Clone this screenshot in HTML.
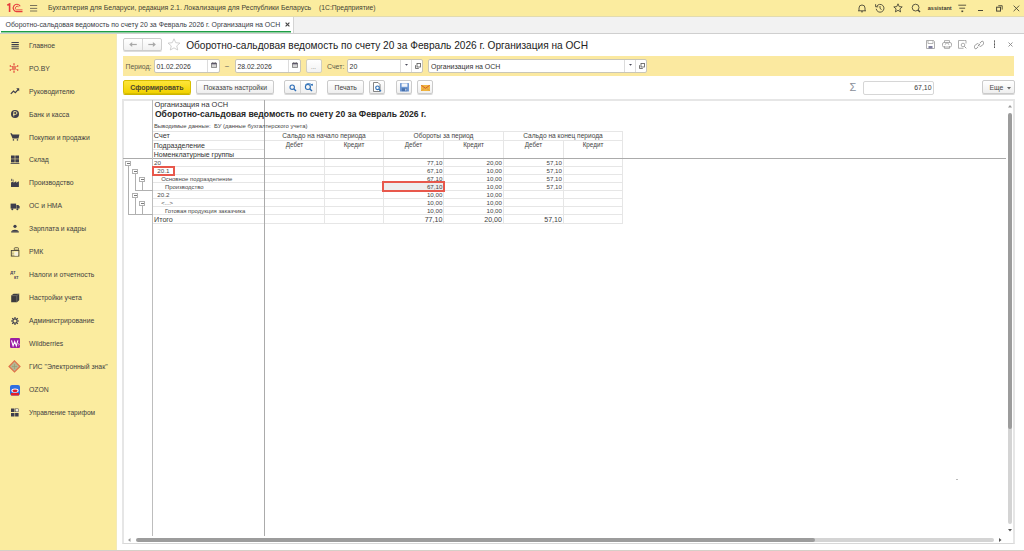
<!DOCTYPE html>
<html><head><meta charset="utf-8">
<style>
*{margin:0;padding:0;box-sizing:border-box}
html,body{width:1024px;height:551px;overflow:hidden;background:#fff;font-family:"Liberation Sans",sans-serif;color:#333}
.a{position:absolute;white-space:nowrap}
</style></head><body>
<div style="position:absolute;left:0px;top:0px;width:1024px;height:16px;background:#fbec9f"></div>
<div style="position:absolute;left:0px;top:16px;width:1024px;height:1px;background:#e2dbb0"></div>
<div class="a" style="left:48px;top:3px;font-size:6.95px;line-height:10px;color:#433f33;">Бухгалтерия для Беларуси, редакция 2.1. Локализация для Республики Беларусь</div>
<div class="a" style="left:319px;top:3px;font-size:6.75px;line-height:10px;color:#433f33;">(1С:Предприятие)</div>
<div style="position:absolute;left:0px;top:17px;width:1024px;height:17px;background:#f2f2f2;border-bottom:1px solid #cfcfcf"></div>
<div style="position:absolute;left:0px;top:17px;width:294px;height:16px;background:#fff;border-right:1px solid #d4d4d4"></div>
<div class="a" style="left:5.5px;top:20px;font-size:6.93px;line-height:10px;color:#383c45;">Оборотно-сальдовая ведомость по счету 20 за Февраль 2026 г. Организация на ОСН</div>
<div style="position:absolute;left:1px;top:31px;width:290px;height:1px;background:#1f9d45"></div>
<div style="position:absolute;left:1px;top:32px;width:290px;height:1px;background:#8fd0a2"></div>
<div style="position:absolute;left:0px;top:34px;width:116px;height:517px;background:#fbec9f"></div>
<div style="position:absolute;left:116px;top:34px;width:1px;height:517px;background:#f3eab8"></div>
<div class="a" style="left:29px;top:41px;font-size:6.85px;line-height:10px;color:#3f3f3f;">Главное</div>
<div class="a" style="left:29px;top:64px;font-size:6.85px;line-height:10px;color:#3f3f3f;">РО.BY</div>
<div class="a" style="left:29px;top:87px;font-size:6.85px;line-height:10px;color:#3f3f3f;">Руководителю</div>
<div class="a" style="left:29px;top:110px;font-size:6.85px;line-height:10px;color:#3f3f3f;">Банк и касса</div>
<div class="a" style="left:29px;top:133px;font-size:6.85px;line-height:10px;color:#3f3f3f;">Покупки и продажи</div>
<div class="a" style="left:29px;top:155px;font-size:6.85px;line-height:10px;color:#3f3f3f;">Склад</div>
<div class="a" style="left:29px;top:178px;font-size:6.85px;line-height:10px;color:#3f3f3f;">Производство</div>
<div class="a" style="left:29px;top:201px;font-size:6.85px;line-height:10px;color:#3f3f3f;">ОС и НМА</div>
<div class="a" style="left:29px;top:224px;font-size:6.85px;line-height:10px;color:#3f3f3f;">Зарплата и кадры</div>
<div class="a" style="left:29px;top:247px;font-size:6.85px;line-height:10px;color:#3f3f3f;">РМК</div>
<div class="a" style="left:29px;top:270px;font-size:6.85px;line-height:10px;color:#3f3f3f;">Налоги и отчетность</div>
<div class="a" style="left:29px;top:293px;font-size:6.85px;line-height:10px;color:#3f3f3f;">Настройки учета</div>
<div class="a" style="left:29px;top:316px;font-size:6.85px;line-height:10px;color:#3f3f3f;">Администрирование</div>
<div class="a" style="left:29px;top:339px;font-size:6.85px;line-height:10px;color:#3f3f3f;">Wildberries</div>
<div class="a" style="left:29px;top:362px;font-size:6.85px;line-height:10px;color:#3f3f3f;">ГИС "Электронный знак"</div>
<div class="a" style="left:29px;top:385px;font-size:6.85px;line-height:10px;color:#3f3f3f;">OZON</div>
<div class="a" style="left:29px;top:408px;font-size:6.6px;line-height:10px;color:#3f3f3f;">Управление тарифом</div>
<div class="a" style="left:186.2px;top:41px;font-size:10.15px;line-height:10px;color:#222;">Оборотно-сальдовая ведомость по счету 20 за Февраль 2026 г. Организация на ОСН</div>
<div style="position:absolute;left:123px;top:38px;width:39px;height:13px;border:1px solid #cdcdcd;border-radius:2px;background:linear-gradient(#fff,#f1f1f1);box-shadow:0 1px 0 #dcdcdc"></div>
<div style="position:absolute;left:142px;top:39px;width:1px;height:11px;background:#d6d6d6"></div>
<svg style="position:absolute;left:128px;top:40px" width="30" height="9" viewBox="0 0 30 9"><path d="M3 4.5h5.8" stroke="#a9a9a9" stroke-width="1.2"/><path d="M1.2 4.5L4.2 2v5z" fill="#a9a9a9"/><path d="M20.3 4.5h5.8" stroke="#a9a9a9" stroke-width="1.2"/><path d="M27.9 4.5L24.9 2v5z" fill="#a9a9a9"/></svg>
<svg style="position:absolute;left:167px;top:38px" width="14" height="13" viewBox="0 0 14 13"><path d="M7 0.8l1.75 3.9 4.2 0.4-3.2 2.8 0.95 4.1L7 9.85 3.3 12l0.95-4.1L1.05 5.1l4.2-0.4z" fill="none" stroke="#c4c4c4" stroke-width="0.8"/></svg>
<div style="position:absolute;left:123px;top:56px;width:891px;height:20px;background:#fbe9a0"></div>
<div style="position:absolute;left:154px;top:59px;width:66px;height:14px;background:#fff;border:1px solid #c9c6b8;border-radius:2px"></div>
<div style="position:absolute;left:207px;top:60px;width:1px;height:12px;background:#dcdcdc"></div>
<div style="position:absolute;left:235px;top:59px;width:66px;height:14px;background:#fff;border:1px solid #c9c6b8;border-radius:2px"></div>
<div style="position:absolute;left:288px;top:60px;width:1px;height:12px;background:#dcdcdc"></div>
<div style="position:absolute;left:306px;top:59px;width:16px;height:14px;border:1px solid #d2cfc0;border-radius:2px;background:linear-gradient(#fff,#f2f2f2)"></div>
<div style="position:absolute;left:347px;top:59px;width:76px;height:14px;background:#fff;border:1px solid #c9c6b8;border-radius:2px"></div>
<div style="position:absolute;left:400px;top:60px;width:1px;height:12px;background:#dcdcdc"></div>
<div style="position:absolute;left:411px;top:60px;width:1px;height:12px;background:#dcdcdc"></div>
<div style="position:absolute;left:428px;top:59px;width:219px;height:14px;background:#fff;border:1px solid #c9c6b8;border-radius:2px"></div>
<div style="position:absolute;left:624px;top:60px;width:1px;height:12px;background:#dcdcdc"></div>
<div style="position:absolute;left:635px;top:60px;width:1px;height:12px;background:#dcdcdc"></div>
<svg style="position:absolute;left:210.5px;top:62px" width="6" height="6" viewBox="0 0 6 6"><rect x="0.4" y="1" width="5.2" height="4.7" rx="0.6" fill="#d4d4d4" stroke="#6a6a6a" stroke-width="0.8"/><rect x="0.4" y="1" width="5.2" height="1.3" fill="#5a5468"/><path d="M1.6 0v1.2M4.4 0v1.2" stroke="#777" stroke-width="0.6"/></svg>
<svg style="position:absolute;left:291.5px;top:62px" width="6" height="6" viewBox="0 0 6 6"><rect x="0.4" y="1" width="5.2" height="4.7" rx="0.6" fill="#d4d4d4" stroke="#6a6a6a" stroke-width="0.8"/><rect x="0.4" y="1" width="5.2" height="1.3" fill="#5a5468"/><path d="M1.6 0v1.2M4.4 0v1.2" stroke="#777" stroke-width="0.6"/></svg>
<svg style="position:absolute;left:404.5px;top:64.3px" width="3" height="2" viewBox="0 0 3 2"><path d="M0 0h3L1.5 1.8z" fill="#4a4a5a"/></svg>
<svg style="position:absolute;left:628.5px;top:64.3px" width="3" height="2" viewBox="0 0 3 2"><path d="M0 0h3L1.5 1.8z" fill="#4a4a5a"/></svg>
<svg style="position:absolute;left:415px;top:62.5px" width="6" height="6" viewBox="0 0 6 6"><path d="M0.5 2.2v3.3h3.3" fill="none" stroke="#555" stroke-width="0.8"/><rect x="2" y="0.5" width="3.5" height="3.5" fill="#fff" stroke="#555" stroke-width="0.8"/></svg>
<svg style="position:absolute;left:639px;top:62.5px" width="6" height="6" viewBox="0 0 6 6"><path d="M0.5 2.2v3.3h3.3" fill="none" stroke="#555" stroke-width="0.8"/><rect x="2" y="0.5" width="3.5" height="3.5" fill="#fff" stroke="#555" stroke-width="0.8"/></svg>
<div class="a" style="left:125.5px;top:62px;font-size:6.85px;line-height:10px;color:#5e5b4c;">Период:</div>
<div class="a" style="left:156.5px;top:62px;font-size:6.85px;line-height:10px;color:#333;">01.02.2026</div>
<div class="a" style="left:225px;top:61px;font-size:7px;line-height:10px;color:#555;">–</div>
<div class="a" style="left:237.5px;top:62px;font-size:6.85px;line-height:10px;color:#333;">28.02.2026</div>
<div class="a" style="left:311px;top:62px;font-size:6px;line-height:10px;color:#666;">...</div>
<div class="a" style="left:327px;top:62px;font-size:7px;line-height:10px;color:#5e5b4c;">Счет:</div>
<div class="a" style="left:349.5px;top:62px;font-size:7px;line-height:10px;color:#333;">20</div>
<div class="a" style="left:431px;top:62px;font-size:7px;line-height:10px;color:#333;">Организация на ОСН</div>
<div style="position:absolute;left:123px;top:80px;width:68px;height:14px;border:1px solid #d8bf00;border-radius:2px;background:linear-gradient(#fde53a,#f2d200);box-shadow:0 1px 0 #cdb400"></div>
<div style="position:absolute;left:196px;top:80px;width:78px;height:14px;border:1px solid #cbcbcb;border-radius:2px;background:linear-gradient(#ffffff,#efefef);box-shadow:0 1px 0 #d9d9d9"></div>
<div style="position:absolute;left:284px;top:80px;width:33px;height:14px;border:1px solid #cbcbcb;border-radius:2px;background:linear-gradient(#ffffff,#efefef);box-shadow:0 1px 0 #d9d9d9"></div>
<div style="position:absolute;left:300px;top:81px;width:1px;height:12px;background:#d4d4d4"></div>
<div style="position:absolute;left:327px;top:80px;width:37px;height:14px;border:1px solid #cbcbcb;border-radius:2px;background:linear-gradient(#ffffff,#efefef);box-shadow:0 1px 0 #d9d9d9"></div>
<div style="position:absolute;left:369px;top:80px;width:16px;height:14px;border:1px solid #cbcbcb;border-radius:2px;background:linear-gradient(#ffffff,#efefef);box-shadow:0 1px 0 #d9d9d9"></div>
<div style="position:absolute;left:396px;top:80px;width:16px;height:14px;border:1px solid #cbcbcb;border-radius:2px;background:linear-gradient(#ffffff,#efefef);box-shadow:0 1px 0 #d9d9d9"></div>
<div style="position:absolute;left:417px;top:80px;width:16px;height:14px;border:1px solid #cbcbcb;border-radius:2px;background:linear-gradient(#ffffff,#efefef);box-shadow:0 1px 0 #d9d9d9"></div>
<svg style="position:absolute;left:289px;top:83.5px" width="8" height="8" viewBox="0 0 8 8"><circle cx="3.2" cy="3.2" r="2.2" fill="none" stroke="#2f6fb8" stroke-width="1.1"/><path d="M4.8 4.8L7 7" stroke="#2f6fb8" stroke-width="1.4"/></svg>
<svg style="position:absolute;left:304px;top:83px" width="10" height="9" viewBox="0 0 10 9"><circle cx="3.9" cy="4" r="2.5" fill="none" stroke="#2a6db5" stroke-width="1.1"/><path d="M5.6 5.7L8 8" stroke="#2a6db5" stroke-width="1.4"/><path d="M1.5 1.5Q4 -0.3 7 1.2L8.5 2.2" stroke="#2a6db5" stroke-width="0.9" fill="none"/><path d="M9 0.5l-0.3 2.3-2-0.5z" fill="#2a6db5"/></svg>
<svg style="position:absolute;left:373px;top:82px" width="9" height="10" viewBox="0 0 9 10"><path d="M0.5 0.5h4.5l2 2v7h-6.5z" fill="#fff" stroke="#666" stroke-width="0.8"/><circle cx="4.5" cy="5.8" r="1.8" fill="none" stroke="#2a6db5" stroke-width="1.1"/><path d="M5.8 7.1L8 9.2" stroke="#2a6db5" stroke-width="1.3"/></svg>
<svg style="position:absolute;left:399.5px;top:83px" width="9" height="9" viewBox="0 0 9 9"><rect x="0" y="0" width="9" height="8.5" rx="0.6" fill="#6d97d2"/><rect x="1.6" y="0.4" width="5.8" height="3.4" fill="#f2f5fa"/><rect x="1.8" y="5.2" width="5.4" height="3" fill="#4670ad"/><rect x="5.2" y="5.7" width="1.2" height="2" fill="#c9d6ea"/></svg>
<svg style="position:absolute;left:420.5px;top:84.5px" width="9" height="6" viewBox="0 0 9 6"><rect x="0" y="0" width="9" height="6" fill="#f0b640"/><path d="M0.3 0.3l4.2 3 4.2-3" stroke="#d0542c" stroke-width="0.9" fill="none"/><path d="M0.3 5.7l3-2.3M8.7 5.7l-3-2.3" stroke="#d98a36" stroke-width="0.6" fill="none"/></svg>
<div class="a" style="left:849.5px;top:81px;font-size:11px;line-height:12px;color:#8a8f9a">&Sigma;</div>
<div style="position:absolute;left:863px;top:81px;width:71px;height:14px;background:#fff;border:1px solid #d6d6d6;border-radius:2px"></div>
<div style="position:absolute;left:982px;top:80px;width:33px;height:14px;border:1px solid #cbcbcb;border-radius:2px;background:linear-gradient(#ffffff,#efefef);box-shadow:0 1px 0 #d9d9d9"></div>
<svg style="position:absolute;left:1006.5px;top:87px" width="4" height="3" viewBox="0 0 4 3"><path d="M0 0h4L2 2.5z" fill="#666"/></svg>
<div class="a" style="left:130.2px;top:83px;font-size:7px;line-height:10px;color:#4a4630;font-weight:bold;">Сформировать</div>
<div class="a" style="left:203.6px;top:83px;font-size:6.85px;line-height:10px;color:#444;">Показать настройки</div>
<div class="a" style="left:334.5px;top:83px;font-size:6.85px;line-height:10px;color:#444;">Печать</div>
<div class="a" style="right:92.5px;top:83px;font-size:6.9px;line-height:10px;color:#3a3a3a;">67,10</div>
<div class="a" style="left:989.5px;top:83px;font-size:6.85px;line-height:10px;color:#4a4a4a;">Еще</div>
<svg style="position:absolute;left:6px;top:3px" width="18" height="10" viewBox="0 0 18 10"><path d="M1.3 2.3L3.6 1V9" stroke="#e63c3c" stroke-width="1.6" fill="none"/><path d="M14.2 3.2A3.7 3.7 0 1 0 10.5 8.6H16.5" stroke="#e63c3c" stroke-width="1.1" fill="none"/><path d="M12.6 3.8A1.9 1.9 0 1 0 10.5 6.9H16.5" stroke="#e63c3c" stroke-width="0.9" fill="none"/></svg>
<svg style="position:absolute;left:30px;top:4px" width="8" height="8" viewBox="0 0 8 8"><path d="M0 1.5h7.2M0 4.4h7.2M0 7h7.2" stroke="#6b6653" stroke-width="0.9"/></svg>
<svg style="position:absolute;left:857px;top:2.5px" width="10" height="10" viewBox="0 0 10 10"><path d="M1 7.8h8M2 7.8V5A3 3 0 0 1 8 5V7.8M4 8.8h2" stroke="#4b4838" stroke-width="0.9" fill="none"/></svg>
<svg style="position:absolute;left:875px;top:2.5px" width="10" height="10" viewBox="0 0 10 10"><path d="M1.6 3.5A3.9 3.9 0 1 1 1.2 5.8" stroke="#4b4838" stroke-width="0.9" fill="none"/><path d="M0.6 1.2v2.6h2.6" stroke="#4b4838" stroke-width="0.9" fill="none"/><path d="M5 3v2.4l1.6 1.2" stroke="#4b4838" stroke-width="0.9" fill="none"/></svg>
<svg style="position:absolute;left:893px;top:2.5px" width="10" height="10" viewBox="0 0 10 10"><path d="M5 0.8l1.2 2.8 3 0.3-2.3 2 0.7 3L5 7.3 2.4 8.9l0.7-3-2.3-2 3-0.3z" stroke="#4b4838" stroke-width="0.9" fill="none" stroke-linejoin="round"/></svg>
<svg style="position:absolute;left:911px;top:2.5px" width="10" height="10" viewBox="0 0 10 10"><circle cx="4.6" cy="4.6" r="3.4" stroke="#4b4838" stroke-width="0.9" fill="none"/><path d="M7 7l2 2" stroke="#4b4838" stroke-width="1.4"/></svg>
<div class="a" style="left:927.8px;top:3px;font-size:5.5px;line-height:10px;color:#3e3b30;font-weight:bold;">assistant</div>
<svg style="position:absolute;left:958px;top:4px" width="9" height="9" viewBox="0 0 9 9"><path d="M0.3 1.2h7.8M1.3 4.2h5.8" stroke="#4b4838" stroke-width="0.9"/><path d="M3.4 6.5h1.8v1.6H3.4z" fill="#4b4838"/></svg>
<div style="position:absolute;left:978px;top:10px;width:5px;height:1px;background:#4b4838"></div>
<svg style="position:absolute;left:995.5px;top:4.5px" width="7" height="7" viewBox="0 0 7 7"><rect x="0.6" y="2.2" width="3.9" height="3.9" stroke="#4b4838" stroke-width="1" fill="none"/><path d="M2.3 0.7h3.9v3.9" stroke="#4b4838" stroke-width="0.9" fill="none"/></svg>
<svg style="position:absolute;left:1013px;top:4.8px" width="7" height="7" viewBox="0 0 7 7"><path d="M0.6 0.6l5.6 5.6M6.2 0.6L0.6 6.2" stroke="#4b4838" stroke-width="0.9"/></svg>
<svg style="position:absolute;left:284.5px;top:22px" width="5" height="5" viewBox="0 0 5 5"><path d="M0.6 0.6l3.8 3.8M4.4 0.6l-3.8 3.8" stroke="#444" stroke-width="1.15"/></svg>
<svg style="position:absolute;left:10px;top:40.5px" width="10" height="10" viewBox="0 0 10 10"><path d="M1.5 1.5h7.3M1.5 3.6h7.3M1.5 5.7h7.3M1.5 7.8h7.3" stroke="#3d3d4c" stroke-width="1.05"/></svg>
<svg style="position:absolute;left:9px;top:63px" width="10" height="10" viewBox="0 0 10 10"><g stroke="#e0463c" stroke-width="0.55"><path d="M5 0.8v8.4M1.2 2.8l7.6 4.4M1.2 7.2l7.6-4.4"/></g><g fill="#e23a30"><circle cx="5" cy="1" r="0.75"/><circle cx="5" cy="9" r="0.75"/><circle cx="1.3" cy="2.9" r="0.75"/><circle cx="8.7" cy="7.1" r="0.75"/><circle cx="1.3" cy="7.1" r="0.75"/><circle cx="8.7" cy="2.9" r="0.75"/></g><rect x="3.3" y="3.6" width="3.4" height="2.8" fill="none" stroke="#e0463c" stroke-width="0.5"/></svg>
<svg style="position:absolute;left:10px;top:86px" width="10" height="10" viewBox="0 0 10 10"><path d="M0.8 7.8L3.5 5l1.8 1.6 3-3.2" stroke="#3d3d4c" stroke-width="1.2" fill="none"/><path d="M6.2 2.3h3v3z" fill="#3d3d4c"/></svg>
<svg style="position:absolute;left:10px;top:109px" width="10" height="10" viewBox="0 0 10 10"><circle cx="5" cy="5" r="4" fill="#3d3d4c"/><path d="M3.8 7.4V2.6h1.7a1.4 1.4 0 0 1 0 2.8H3" stroke="#fbec9f" stroke-width="0.9" fill="none"/></svg>
<svg style="position:absolute;left:10px;top:131.5px" width="10" height="10" viewBox="0 0 10 10"><path d="M0.3 1.2h1.4l0.9 1.2H9.4l-0.9 4.2H2.6z" fill="#3d3d4c"/><rect x="2.8" y="7.2" width="1.3" height="1.4" fill="#3d3d4c"/><rect x="6.8" y="7.2" width="1.3" height="1.4" fill="#3d3d4c"/></svg>
<svg style="position:absolute;left:10px;top:155px" width="10" height="10" viewBox="0 0 10 10"><rect x="1" y="0.5" width="3.7" height="3.2" fill="#3d3d4c"/><rect x="5.3" y="0.5" width="3.7" height="3.2" fill="#3d3d4c"/><rect x="1" y="4.2" width="3.7" height="3.2" fill="#3d3d4c"/><rect x="5.3" y="4.2" width="3.7" height="3.2" fill="#3d3d4c"/><rect x="0.6" y="8" width="8.8" height="0.8" fill="#3d3d4c"/></svg>
<svg style="position:absolute;left:10px;top:177.5px" width="10" height="10" viewBox="0 0 10 10"><path d="M1 9V4.5l2.6-1.3v1.5l2.6-1.5v1.5L8.9 3.2V9z" fill="#3d3d4c"/><rect x="1.3" y="0.8" width="0.9" height="2.3" fill="#3d3d4c"/><rect x="2.8" y="1.6" width="0.7" height="1.3" fill="#3d3d4c"/></svg>
<svg style="position:absolute;left:10px;top:201.5px" width="10" height="10" viewBox="0 0 10 10"><rect x="0.6" y="1.6" width="5.5" height="5" fill="#3d3d4c"/><path d="M6.4 3h2l1.2 1.6v2H6.4z" fill="#3d3d4c"/><circle cx="2.3" cy="7.3" r="1" fill="#3d3d4c"/><circle cx="7.4" cy="7.3" r="1" fill="#3d3d4c"/></svg>
<svg style="position:absolute;left:10px;top:223.5px" width="10" height="10" viewBox="0 0 10 10"><circle cx="5" cy="2.3" r="1.6" fill="#3d3d4c"/><path d="M1.2 7.8C1.6 5 8.4 5 8.8 7.8z" fill="#3d3d4c"/><rect x="1.2" y="7.6" width="7.6" height="0.9" fill="#3d3d4c"/></svg>
<svg style="position:absolute;left:10px;top:247px" width="10" height="10" viewBox="0 0 10 10"><rect x="1.3" y="3.5" width="7.6" height="5.6" fill="none" stroke="#4a4538" stroke-width="0.9"/><rect x="4.5" y="4.8" width="3.5" height="4" fill="#f5f1e0"/><rect x="4.3" y="0.7" width="4.2" height="2.4" rx="0.8" fill="none" stroke="#4a4538" stroke-width="0.8"/><path d="M2.2 5h1.5M2.2 6.5h1.5M2.2 8h1.5" stroke="#777" stroke-width="0.5"/></svg>
<svg style="position:absolute;left:10px;top:270px" width="10" height="10" viewBox="0 0 10 10"><text x="0.3" y="4.2" font-size="4.6" font-family="Liberation Sans" font-weight="bold" fill="#4a4858">дт</text><text x="4" y="8.8" font-size="4.6" font-family="Liberation Sans" font-weight="bold" fill="#4a4858">кт</text></svg>
<svg style="position:absolute;left:10px;top:292.5px" width="10" height="10" viewBox="0 0 10 10"><path d="M1.2 2.6l2.4-1.9h5.6v6.5L7 9.2H1.2z" fill="#3b3b3e"/><path d="M6.8 2.6V9M1.2 2.6h5.6l2.4-1.9" stroke="#8a8778" stroke-width="0.6" fill="none"/></svg>
<svg style="position:absolute;left:10px;top:316px" width="10" height="10" viewBox="0 0 10 10"><circle cx="5" cy="5" r="2.1" stroke="#3d3d4c" stroke-width="1.1" fill="none"/><g stroke="#3d3d4c" stroke-width="1.2"><path d="M5 1v1.5M5 7.5V9M1 5h1.5M7.5 5H9M2.2 2.2l1 1M6.8 6.8l1 1M2.2 7.8l1-1M6.8 3.2l1-1"/></g></svg>
<svg style="position:absolute;left:10px;top:338px" width="10" height="10" viewBox="0 0 10 10"><rect x="0" y="0" width="10" height="10" rx="1.2" fill="#9b1fa3"/><path d="M1.5 2.4l1.6 5.4 1.6-4.2 1.6 4.2 1.6-5.4" stroke="#fff" stroke-width="1.1" fill="none"/><path d="M8.3 5.5a0.9 0.9 0 1 1 0 1.8" stroke="#fff" stroke-width="0.6" fill="none"/></svg>
<svg style="position:absolute;left:8px;top:360px" width="13" height="13" viewBox="0 0 13 13"><path d="M6.5 0.8L12 6.5 6.5 12 1 6.5z" fill="#b5b592" stroke="#e0734c" stroke-width="1.2"/><path d="M6.5 4v5M4 6.5h5" stroke="#8f9a6e" stroke-width="0.6"/></svg>
<svg style="position:absolute;left:10px;top:384.5px" width="10" height="11" viewBox="0 0 10 11"><rect x="0" y="0" width="10" height="10.5" rx="2" fill="#2f6fe0"/><ellipse cx="5" cy="5.6" rx="3.6" ry="2.2" fill="#fff"/><ellipse cx="5" cy="5.8" rx="2.6" ry="1.4" fill="#e21f2a"/><rect x="1" y="8" width="8" height="2.5" fill="#e21f2a"/></svg>
<svg style="position:absolute;left:10px;top:408px" width="10" height="10" viewBox="0 0 10 10"><rect x="1" y="0.5" width="3.5" height="3.5" fill="#3d3d4c"/><rect x="5.4" y="0.8" width="3" height="3" fill="#f2eedb" stroke="#3d3d4c" stroke-width="0.5"/><rect x="1" y="5" width="3.5" height="3.5" fill="#3d3d4c"/><rect x="5.1" y="5" width="3.5" height="3.5" fill="#3d3d4c"/></svg>
<svg style="position:absolute;left:926px;top:40px" width="9" height="9" viewBox="0 0 9 9"><path d="M0.5 0.5h7l1 1v7h-8z" stroke="#9a9a9a" stroke-width="0.8" fill="none"/><path d="M2 0.5v3h5v-3" stroke="#9a9a9a" stroke-width="0.7" fill="none"/><rect x="2.5" y="6" width="4" height="2.5" fill="#8080a0"/></svg>
<svg style="position:absolute;left:942px;top:40px" width="10" height="9" viewBox="0 0 10 9"><rect x="0.5" y="2.5" width="9" height="4.5" rx="1.5" stroke="#9a9a9a" stroke-width="0.8" fill="none"/><path d="M2.5 2.5V0.6h5v1.9M2.5 6v2.4h5V6" stroke="#9a9a9a" stroke-width="0.8" fill="none"/><path d="M3.2 4.8a1.8 1.8 0 0 1 3.6 0" stroke="#9a9a9a" stroke-width="0.7" fill="none"/></svg>
<svg style="position:absolute;left:958px;top:40px" width="9" height="9" viewBox="0 0 9 9"><path d="M6.5 0.5H0.5v7.8h5" stroke="#9a9a9a" stroke-width="0.8" fill="none"/><path d="M6.5 0.5h1.5v3" stroke="#9a9a9a" stroke-width="0.8" fill="none"/><circle cx="5" cy="5" r="1.8" stroke="#9a9a9a" stroke-width="0.8" fill="none"/><path d="M6.3 6.3l2 2" stroke="#9a9a9a" stroke-width="1"/></svg>
<svg style="position:absolute;left:973.5px;top:39.5px" width="10" height="10" viewBox="0 0 10 10"><path d="M3.8 6.2L6.2 3.8" stroke="#8a8a8a" stroke-width="0.9"/><path d="M4.2 6.9L2.9 8.2a1.6 1.6 0 0 1-2.3-2.3L2.4 4.1a1.6 1.6 0 0 1 2.2 0M5.8 3.1L7.1 1.8a1.6 1.6 0 0 1 2.3 2.3L7.6 5.9a1.6 1.6 0 0 1-2.2 0" stroke="#8a8a8a" stroke-width="0.9" fill="none"/></svg>
<svg style="position:absolute;left:993px;top:40px" width="3" height="9" viewBox="0 0 3 9"><path d="M1.5 0.5v7.5" stroke="#8a8a8a" stroke-width="0.8"/><path d="M1.5 0.5v1.2M1.5 3.7v1.4M1.5 6.8V8" stroke="#555" stroke-width="1"/></svg>
<svg style="position:absolute;left:1008px;top:41.5px" width="5" height="5" viewBox="0 0 5 5"><path d="M0.5 0.5l4 4M4.5 0.5l-4 4" stroke="#888" stroke-width="0.9"/></svg>
<div style="position:absolute;left:122px;top:99px;width:893px;height:445px;border:2px solid #e6e6e6;border-bottom:1px solid #d8d8d8;background:#fff"></div>
<div style="position:absolute;left:152px;top:131px;width:470px;height:1px;background:#e6e6e6"></div>
<div style="position:absolute;left:152px;top:140px;width:470px;height:1px;background:#e6e6e6"></div>
<div style="position:absolute;left:152px;top:149px;width:112px;height:1px;background:#e6e6e6"></div>
<div style="position:absolute;left:383px;top:131px;width:1px;height:93px;background:#e6e6e6"></div>
<div style="position:absolute;left:503px;top:131px;width:1px;height:93px;background:#e6e6e6"></div>
<div style="position:absolute;left:622px;top:131px;width:1px;height:93px;background:#e6e6e6"></div>
<div style="position:absolute;left:324px;top:140px;width:1px;height:84px;background:#e6e6e6"></div>
<div style="position:absolute;left:443px;top:140px;width:1px;height:84px;background:#e6e6e6"></div>
<div style="position:absolute;left:563px;top:140px;width:1px;height:84px;background:#e6e6e6"></div>
<div style="position:absolute;left:152px;top:166px;width:470px;height:1px;background:#e6e6e6"></div>
<div style="position:absolute;left:152px;top:174px;width:470px;height:1px;background:#e6e6e6"></div>
<div style="position:absolute;left:152px;top:182px;width:470px;height:1px;background:#e6e6e6"></div>
<div style="position:absolute;left:152px;top:190px;width:470px;height:1px;background:#e6e6e6"></div>
<div style="position:absolute;left:152px;top:198px;width:470px;height:1px;background:#e6e6e6"></div>
<div style="position:absolute;left:152px;top:206px;width:470px;height:1px;background:#e6e6e6"></div>
<div style="position:absolute;left:152px;top:214px;width:470px;height:1px;background:#e6e6e6"></div>
<div style="position:absolute;left:152px;top:223px;width:470px;height:1px;background:#e6e6e6"></div>
<div style="position:absolute;left:123px;top:158px;width:883px;height:1px;background:#ababab"></div>
<div style="position:absolute;left:152px;top:100px;width:1px;height:436px;background:#bdbdbd"></div>
<div style="position:absolute;left:264px;top:100px;width:1px;height:436px;background:#ababab"></div>
<div class="a" style="left:154.4px;top:100px;font-size:7.45px;line-height:10px;color:#333;">Организация на ОСН</div>
<div class="a" style="left:154.9px;top:109px;font-size:8.6px;line-height:10px;color:#262626;font-weight:bold;">Оборотно-сальдовая ведомость по счету 20 за Февраль 2026 г.</div>
<div class="a" style="left:153.9px;top:121px;font-size:5.92px;line-height:10px;color:#444;">Выводимые данные:&nbsp; БУ (данные бухгалтерского учета)</div>
<div class="a" style="left:153.8px;top:131px;font-size:7.2px;line-height:10px;color:#333;">Счет</div>
<div class="a" style="left:153.8px;top:141px;font-size:7.0px;line-height:10px;color:#333;">Подразделение</div>
<div class="a" style="left:153.8px;top:150px;font-size:7.0px;line-height:10px;color:#333;">Номенклатурные группы</div>
<div class="a" style="left:224px;width:200px;text-align:center;top:131px;font-size:6.6px;line-height:10px;color:#444;">Сальдо на начало периода</div>
<div class="a" style="left:343.5px;width:200px;text-align:center;top:131px;font-size:6.6px;line-height:10px;color:#444;">Обороты за период</div>
<div class="a" style="left:463px;width:200px;text-align:center;top:131px;font-size:6.6px;line-height:10px;color:#444;">Сальдо на конец периода</div>
<div class="a" style="left:194.5px;width:200px;text-align:center;top:140px;font-size:6.3px;line-height:10px;color:#444;">Дебет</div>
<div class="a" style="left:254px;width:200px;text-align:center;top:140px;font-size:6.3px;line-height:10px;color:#444;">Кредит</div>
<div class="a" style="left:313.5px;width:200px;text-align:center;top:140px;font-size:6.3px;line-height:10px;color:#444;">Дебет</div>
<div class="a" style="left:373.5px;width:200px;text-align:center;top:140px;font-size:6.3px;line-height:10px;color:#444;">Кредит</div>
<div class="a" style="left:433.5px;width:200px;text-align:center;top:140px;font-size:6.3px;line-height:10px;color:#444;">Дебет</div>
<div class="a" style="left:493px;width:200px;text-align:center;top:140px;font-size:6.3px;line-height:10px;color:#444;">Кредит</div>
<div style="position:absolute;left:382px;top:181px;width:63px;height:11px;background:#ededed;border:2px solid #e8584c"></div>
<div class="a" style="left:154px;top:158px;font-size:6.25px;line-height:10px;color:#484848;">20</div>
<div class="a" style="right:581.6px;top:158px;font-size:6.2px;line-height:10px;color:#444;">77,10</div>
<div class="a" style="right:522px;top:158px;font-size:6.2px;line-height:10px;color:#444;">20,00</div>
<div class="a" style="right:462px;top:158px;font-size:6.2px;line-height:10px;color:#444;">57,10</div>
<div class="a" style="left:157.3px;top:166px;font-size:6.25px;line-height:10px;color:#484848;">20.1</div>
<div class="a" style="right:581.6px;top:166px;font-size:6.2px;line-height:10px;color:#444;">67,10</div>
<div class="a" style="right:522px;top:166px;font-size:6.2px;line-height:10px;color:#444;">10,00</div>
<div class="a" style="right:462px;top:166px;font-size:6.2px;line-height:10px;color:#444;">57,10</div>
<div class="a" style="left:161.2px;top:174px;font-size:5.95px;line-height:10px;color:#484848;">Основное подразделение</div>
<div class="a" style="right:581.6px;top:174px;font-size:6.2px;line-height:10px;color:#444;">67,10</div>
<div class="a" style="right:522px;top:174px;font-size:6.2px;line-height:10px;color:#444;">10,00</div>
<div class="a" style="right:462px;top:174px;font-size:6.2px;line-height:10px;color:#444;">57,10</div>
<div class="a" style="left:164.9px;top:182px;font-size:5.95px;line-height:10px;color:#484848;">Производство</div>
<div class="a" style="right:581.6px;top:182px;font-size:6.2px;line-height:10px;color:#444;">67,10</div>
<div class="a" style="right:522px;top:182px;font-size:6.2px;line-height:10px;color:#444;">10,00</div>
<div class="a" style="right:462px;top:182px;font-size:6.2px;line-height:10px;color:#444;">57,10</div>
<div class="a" style="left:157.3px;top:190px;font-size:6.25px;line-height:10px;color:#484848;">20.2</div>
<div class="a" style="right:581.6px;top:190px;font-size:6.2px;line-height:10px;color:#444;">10,00</div>
<div class="a" style="right:522px;top:190px;font-size:6.2px;line-height:10px;color:#444;">10,00</div>
<div class="a" style="left:161.2px;top:198px;font-size:5.95px;line-height:10px;color:#484848;">&lt;...&gt;</div>
<div class="a" style="right:581.6px;top:198px;font-size:6.2px;line-height:10px;color:#444;">10,00</div>
<div class="a" style="right:522px;top:198px;font-size:6.2px;line-height:10px;color:#444;">10,00</div>
<div class="a" style="left:164.9px;top:206px;font-size:5.95px;line-height:10px;color:#484848;">Готовая продукция заказчика</div>
<div class="a" style="right:581.6px;top:206px;font-size:6.2px;line-height:10px;color:#444;">10,00</div>
<div class="a" style="right:522px;top:206px;font-size:6.2px;line-height:10px;color:#444;">10,00</div>
<div style="position:absolute;left:152px;top:166px;width:23px;height:10px;border:2px solid #e8584c"></div>
<div class="a" style="left:154px;top:215px;font-size:7.2px;line-height:10px;color:#404040;">Итого</div>
<div class="a" style="right:581.6px;top:215px;font-size:7.1px;line-height:10px;color:#404040;">77,10</div>
<div class="a" style="right:522px;top:215px;font-size:7.1px;line-height:10px;color:#404040;">20,00</div>
<div class="a" style="right:462px;top:215px;font-size:7.1px;line-height:10px;color:#404040;">57,10</div>
<div style="position:absolute;left:127.5px;top:165px;width:1px;height:49px;background:#b0b0b0"></div>
<div style="position:absolute;left:134.5px;top:173px;width:1px;height:17px;background:#b0b0b0"></div>
<div style="position:absolute;left:141.5px;top:181px;width:1px;height:9px;background:#b0b0b0"></div>
<div style="position:absolute;left:134.5px;top:197px;width:1px;height:17px;background:#b0b0b0"></div>
<div style="position:absolute;left:141.5px;top:205px;width:1px;height:9px;background:#b0b0b0"></div>
<div style="position:absolute;left:134.5px;top:190px;width:18px;height:1px;background:#b0b0b0"></div>
<div style="position:absolute;left:127.5px;top:214px;width:25px;height:1px;background:#b0b0b0"></div>
<div style="position:absolute;left:125px;top:161px;width:6px;height:5px;background:#fff;border:1px solid #b0b0b0"></div>
<div style="position:absolute;left:126.5px;top:163px;width:3px;height:1px;background:#7a7a7a"></div>
<div style="position:absolute;left:132px;top:169px;width:6px;height:5px;background:#fff;border:1px solid #b0b0b0"></div>
<div style="position:absolute;left:133.5px;top:171px;width:3px;height:1px;background:#7a7a7a"></div>
<div style="position:absolute;left:139px;top:177px;width:6px;height:5px;background:#fff;border:1px solid #b0b0b0"></div>
<div style="position:absolute;left:140.5px;top:179px;width:3px;height:1px;background:#7a7a7a"></div>
<div style="position:absolute;left:132px;top:193px;width:6px;height:5px;background:#fff;border:1px solid #b0b0b0"></div>
<div style="position:absolute;left:133.5px;top:195px;width:3px;height:1px;background:#7a7a7a"></div>
<div style="position:absolute;left:139px;top:201px;width:6px;height:5px;background:#fff;border:1px solid #b0b0b0"></div>
<div style="position:absolute;left:140.5px;top:203px;width:3px;height:1px;background:#7a7a7a"></div>
<div style="position:absolute;left:1008px;top:420px;width:4px;height:104px;background:#d4d4d4;border-radius:0 0 2px 2px"></div>
<div style="position:absolute;left:1008px;top:113px;width:4px;height:316px;background:#9c9c9c;border-radius:2px"></div>
<svg style="position:absolute;left:1008px;top:105px" width="4" height="3" viewBox="0 0 4 3"><path d="M0 2.5h4L2 0z" fill="#999"/></svg>
<svg style="position:absolute;left:1008px;top:529px" width="4" height="3" viewBox="0 0 4 3"><path d="M0 0h4L2 2.5z" fill="#555"/></svg>
<div style="position:absolute;left:806px;top:538px;width:188px;height:4px;background:#d4d4d4;border-radius:0 2px 2px 0"></div>
<div style="position:absolute;left:136px;top:538px;width:679px;height:4px;background:#9c9c9c;border-radius:2px"></div>
<svg style="position:absolute;left:128px;top:538px" width="3" height="4" viewBox="0 0 3 4"><path d="M2.5 0v4L0 2z" fill="#999"/></svg>
<svg style="position:absolute;left:999px;top:538px" width="3" height="4" viewBox="0 0 3 4"><path d="M0 0v4L2.5 2z" fill="#555"/></svg>
<div style="position:absolute;left:956px;top:479px;width:2px;height:1px;background:#bbb"></div>
<div style="position:absolute;left:0px;top:550px;width:1024px;height:1px;background:#d6cfc8"></div>
</body></html>
